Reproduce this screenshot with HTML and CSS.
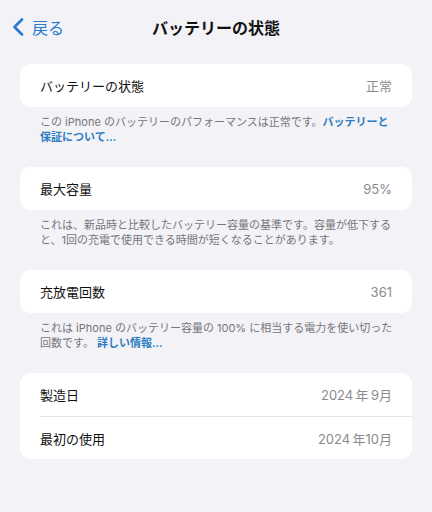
FILE: index.html
```html
<!DOCTYPE html>
<html lang="ja">
<head>
    <meta charset="UTF-8">
    <meta name="viewport" content="width=device-width, initial-scale=1.0">
    <title>バッテリーの状態</title>
    <link rel="stylesheet" href="styles.css">
</head>
<body>
    <div class="nav">
        <div class="back">
            <svg class="chevron" width="12" height="18" viewBox="0 0 12 18">
                <polyline points="10,1.5 2.5,9 10,16.5" fill="none" stroke="#2a7bd0" stroke-width="2.6" stroke-linecap="round" stroke-linejoin="round"/>
            </svg>
            <span>戻る</span>
        </div>
        <div class="title">バッテリーの状態</div>
        <div></div>
    </div>

    <div class="main">
        <div class="section">
            <div class="card">
                <div class="row">
                    <span class="label">バッテリーの状態</span>
                    <span class="value">正常</span>
                </div>
            </div>
            <p class="caption">この iPhone のバッテリーのパフォーマンスは正常です。<span class="link">バッテリーと保証について...</span></p>
        </div>

        <div class="section">
            <div class="card">
                <div class="row">
                    <span class="label">最大容量</span>
                    <span class="value">95%</span>
                </div>
            </div>
            <p class="caption">これは、新品時と比較したバッテリー容量の基準です。容量が低下すると、1回の充電で使用できる時間が短くなることがあります。</p>
        </div>

        <div class="section">
            <div class="card">
                <div class="row">
                    <span class="label">充放電回数</span>
                    <span class="value">361</span>
                </div>
            </div>
            <p class="caption">これは iPhone のバッテリー容量の 100% に相当する電力を使い切った回数です。 <span class="link">詳しい情報...</span></p>
        </div>

        <div class="section">
            <div class="card">
                <div class="row">
                    <span class="label">製造日</span>
                    <span class="value">2024&#8201;年&#8201;9月</span>
                </div>
                <div class="row">
                    <span class="label">最初の使用</span>
                    <span class="value">2024&#8201;年10月</span>
                </div>
            </div>
        </div>
    </div>
</body>
</html>
```

FILE: styles.css
```css
body {
    font-family: Inter, "Noto Sans CJK JP", sans-serif;
    margin: 0;
    padding: 0;
    background-color: #f2f2f7;
    color: #111111;
}
.nav {
    display: grid;
    grid-template-columns: 1fr auto 1fr;
    align-items: center;
    height: 53px;
}
.back {
    display: flex;
    align-items: center;
    padding-left: 12px;
    color: #2a7bd0;
    font-size: 16px;
}
.chevron {
    margin-right: 8px;
}
.title {
    font-size: 16px;
    font-weight: bold;
}
.main {
    padding: 11px 20px 0 20px;
}
.section {
    margin-bottom: 22px;
}
.card {
    background-color: white;
    border-radius: 10px;
    padding-left: 20px;
}
.row {
    display: flex;
    justify-content: space-between;
    align-items: center;
    height: 43px;
    padding-right: 20px;
    font-size: 13px;
}
.row + .row {
    border-top: 1px solid #e3e3e7;
    height: 42px;
}
.value {
    color: #8a8a8e;
}
.caption {
    margin: 0;
    padding: 8px 18px 0 20px;
    font-size: 11px;
    line-height: 15px;
    color: #76767b;
}
.link {
    color: #2f7dc2;
    font-weight: 600;
}
```
